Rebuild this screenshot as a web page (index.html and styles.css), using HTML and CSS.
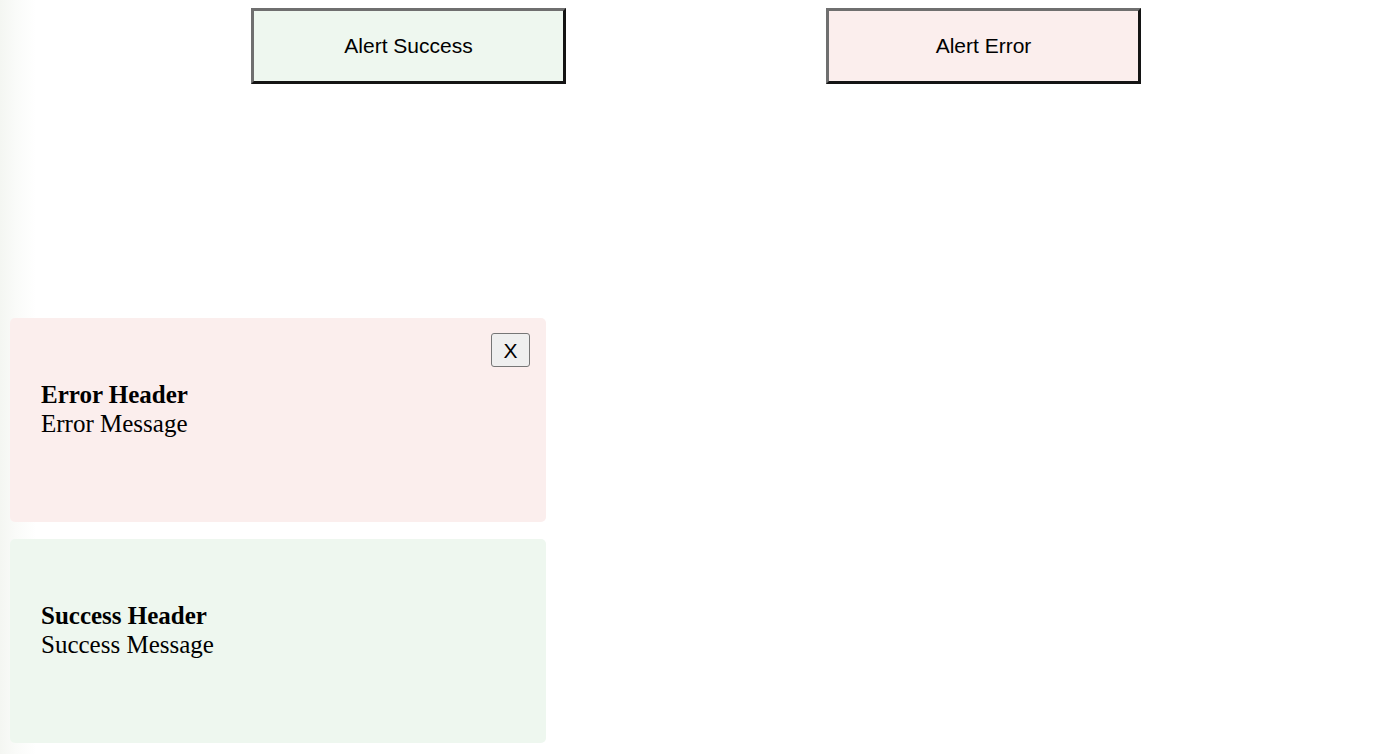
FILE: index.html
```html
<!DOCTYPE html>
<html lang="en">
<head>
<meta charset="utf-8">
<title>Alerts</title>
<link rel="stylesheet" href="styles.css">
</head>
<body>
  <div class="actions">
    <button class="trigger trigger-success" type="button">Alert Success</button>
    <button class="trigger trigger-error" type="button">Alert Error</button>
  </div>
  <div class="toasts">
    <div class="toast toast-error">
      <button class="toast-close" type="button">X</button>
      <div class="toast-title">Error Header</div>
      <div class="toast-msg">Error Message</div>
    </div>
    <div class="toast toast-success">
      <div class="toast-title">Success Header</div>
      <div class="toast-msg">Success Message</div>
    </div>
  </div>
</body>
</html>
```

FILE: styles.css
```css
html {
  background: linear-gradient(to right, #f4f6f2 0, #fafbf9 16px, #ffffff 36px);
  min-height: 100%;
}
body {
  margin: 8px;
  font-family: "Liberation Serif", "Times New Roman", serif;
  color: #000;
}
.actions {
  display: flex;
  gap: 260px;
  padding-left: 243px;
}
.trigger {
  box-sizing: border-box;
  width: 315px;
  height: 76px;
  border-style: solid;
  border-width: 3px;
  border-color: #6f6f6f #141414 #141414 #6f6f6f;
  font-family: "Liberation Sans", Arial, sans-serif;
  font-size: 21px;
  color: #000;
  padding: 0;
  cursor: pointer;
}
.trigger-success { background: #eef7ef; }
.trigger-error { background: #fbeeed; }
.toasts {
  margin-top: 234px;
  margin-left: 2px;
  display: flex;
  flex-direction: column;
  gap: 17px;
  width: 536px;
}
.toast {
  position: relative;
  box-sizing: border-box;
  height: 204px;
  padding: 62px 31px;
  border-radius: 5px;
  font-size: 25px;
  line-height: 29px;
}
.toast-error { background: #fbeeed; }
.toast-success { background: #eef7ef; }
.toast-title { font-weight: bold; }
.toast-close {
  position: absolute;
  top: 15px;
  right: 16px;
  width: 39px;
  height: 34px;
  padding: 0;
  border: 1px solid #767676;
  border-radius: 3px;
  background: #efefef;
  font-family: "Liberation Sans", Arial, sans-serif;
  font-size: 21px;
  line-height: 1;
  color: #000;
}
```
